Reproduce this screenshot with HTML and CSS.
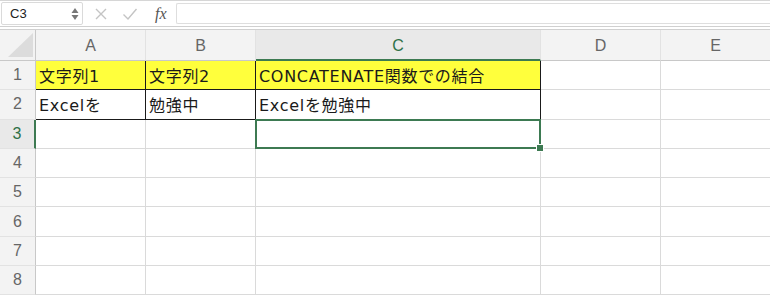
FILE: index.html
```html
<!DOCTYPE html>
<html lang="ja">
<head>
    <meta charset="UTF-8">
    <title>CONCATENATE</title>
    <link rel="stylesheet" href="styles.css">
</head>
<body>

    <div class="formula-bar">
        <div class="name-box">
            <span>C3</span>
            <svg class="spin" width="8" height="14" viewBox="0 0 8 14">
                <path d="M4 1 L7.5 6 H0.5 Z" fill="#777"/>
                <path d="M4 13 L7.5 8 H0.5 Z" fill="#777"/>
            </svg>
        </div>
        <div class="fx-buttons">
            <svg width="14" height="14" viewBox="0 0 14 14"><path d="M2 2 L12 12 M12 2 L2 12" stroke="#c4c4c4" stroke-width="1.4"/></svg>
            <svg width="16" height="14" viewBox="0 0 16 14"><path d="M1.5 7.5 L6 12 L14.5 2" stroke="#c4c4c4" stroke-width="1.4" fill="none"/></svg>
            <span class="fx">fx</span>
        </div>
        <div class="formula-input"></div>
    </div>

    <div class="sheet">
        <div class="corner"><span class="tri"></span></div>
        <div class="col-head">A</div>
        <div class="col-head">B</div>
        <div class="col-head active">C</div>
        <div class="col-head">D</div>
        <div class="col-head">E</div>

        <div class="row-head">1</div>
        <div class="cell hl boxed">文字列1</div>
        <div class="cell hl boxed">文字列2</div>
        <div class="cell hl boxed">CONCATENATE関数での結合</div>
        <div class="cell"></div>
        <div class="cell"></div>

        <div class="row-head">2</div>
        <div class="cell boxed">Excelを</div>
        <div class="cell boxed">勉強中</div>
        <div class="cell boxed">Excelを勉強中</div>
        <div class="cell"></div>
        <div class="cell"></div>

        <div class="row-head active">3</div>
        <div class="cell"></div>
        <div class="cell"></div>
        <div class="cell selected"><span class="handle"></span></div>
        <div class="cell"></div>
        <div class="cell"></div>

        <div class="row-head">4</div>
        <div class="cell"></div><div class="cell"></div><div class="cell"></div><div class="cell"></div><div class="cell"></div>
        <div class="row-head">5</div>
        <div class="cell"></div><div class="cell"></div><div class="cell"></div><div class="cell"></div><div class="cell"></div>
        <div class="row-head">6</div>
        <div class="cell"></div><div class="cell"></div><div class="cell"></div><div class="cell"></div><div class="cell"></div>
        <div class="row-head">7</div>
        <div class="cell"></div><div class="cell"></div><div class="cell"></div><div class="cell"></div><div class="cell"></div>
        <div class="row-head">8</div>
        <div class="cell"></div><div class="cell"></div><div class="cell"></div><div class="cell"></div><div class="cell"></div>
    </div>

</body>
</html>
```

FILE: styles.css
```css
body {
    margin: 0;
    font-family: "Liberation Sans", "Noto Sans CJK JP", sans-serif;
    background: #fff;
    overflow: hidden;
}

.formula-bar {
    display: flex;
    align-items: center;
    height: 30px;
    box-sizing: border-box;
    border-top: 1px solid #d6d6d6;
    border-bottom: 4px double #d0d0d0;
    background: #fff;
}

.name-box {
    display: flex;
    align-items: center;
    justify-content: space-between;
    width: 82px;
    height: 23px;
    box-sizing: border-box;
    margin-left: 1px;
    padding: 0 3px 0 8px;
    border: 1px solid #dadada;
    border-radius: 2px;
    font-size: 13px;
    color: #222;
}

.fx-buttons {
    display: flex;
    align-items: center;
    gap: 14px;
    padding-left: 11px;
    width: 82px;
}

.fx {
    font-family: "Liberation Serif", serif;
    font-style: italic;
    font-size: 16px;
    color: #555;
    margin-left: 3px;
}

.formula-input {
    flex: 1;
    height: 19px;
    border: 1px solid #dedede;
    border-right: none;
    border-radius: 2px 0 0 2px;
}

.sheet {
    display: grid;
    grid-template-columns: 36px 110px 110px 285px 120px 110px;
    grid-template-rows: 31px repeat(8, 29.3px);
}

.sheet > div {
    box-sizing: border-box;
    border-right: 1px solid #dadada;
    border-bottom: 1px solid #dadada;
}

.corner {
    position: relative;
    background: #f3f3f3;
    border-right-color: #c8c8c8 !important;
    border-bottom-color: #c8c8c8 !important;
}

.tri {
    position: absolute;
    right: 2px;
    bottom: 3px;
    width: 0;
    height: 0;
    border-left: 25px solid transparent;
    border-bottom: 24px solid #dcdcdc;
}

.col-head {
    display: flex;
    align-items: center;
    justify-content: center;
    background: #f3f3f3;
    color: #666;
    font-size: 16px;
    padding-top: 2px;
    border-right-color: #e2e2e2 !important;
    border-bottom-color: #c8c8c8 !important;
}

.col-head.active {
    background: #e9e9e9;
    color: #2f7148;
    border-bottom: 2px solid #3d7a52 !important;
}

.row-head {
    display: flex;
    align-items: center;
    justify-content: center;
    background: #f3f3f3;
    color: #666;
    font-size: 16px;
    border-right-color: #c8c8c8 !important;
    border-bottom-color: #e2e2e2 !important;
}

.row-head.active {
    background: #e9e9e9;
    color: #2f7148;
    border-right: 2px solid #3d7a52 !important;
}

.cell {
    display: flex;
    align-items: center;
    padding-left: 3px;
    font-family: "DejaVu Sans", "Noto Sans CJK JP", sans-serif;
    font-size: 16px;
    letter-spacing: 0.7px;
    color: #1a1a1a;
    white-space: nowrap;
}

.cell.hl {
    background: #ffff3c;
}

.cell.boxed {
    border-right-color: #1a1a1a;
    border-bottom-color: #1a1a1a;
}

.cell.selected {
    position: relative;
    border: 2px solid #3d7a52;
    margin: -1px 0 0 -1px;
}

.handle {
    position: absolute;
    right: -5px;
    bottom: -5px;
    width: 6px;
    height: 6px;
    background: #3d7a52;
    border: 1px solid #fff;
}
```
